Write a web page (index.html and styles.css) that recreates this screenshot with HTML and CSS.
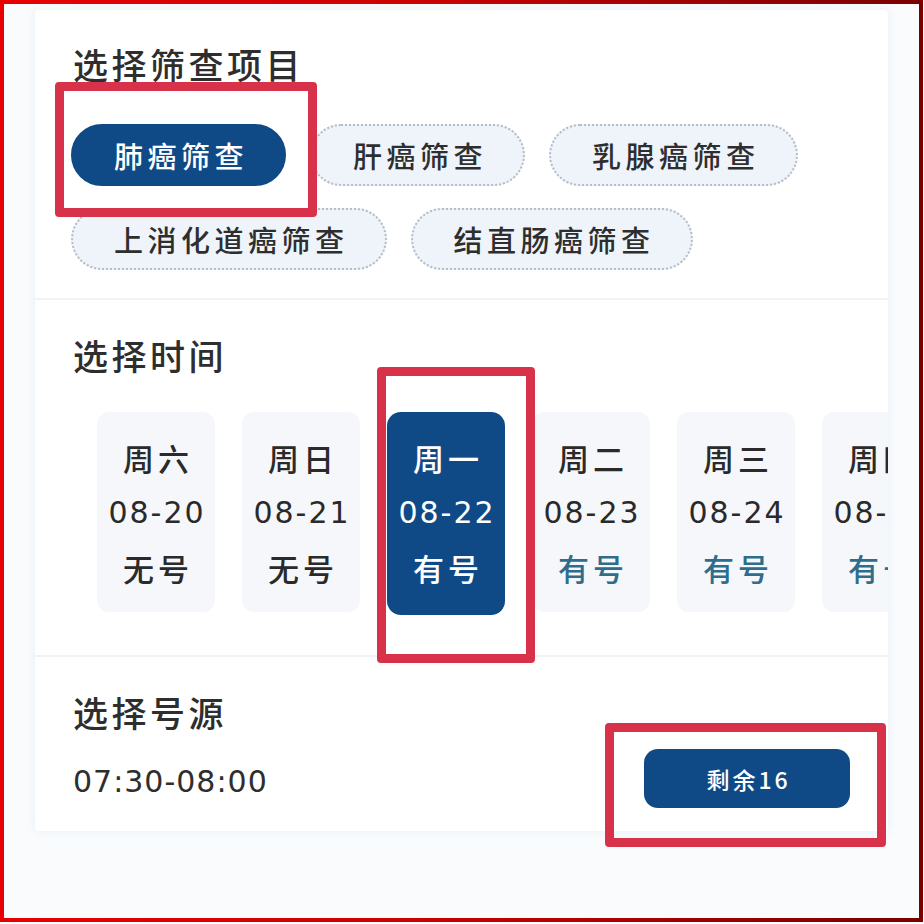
FILE: index.html
```html
<!DOCTYPE html>
<html lang="zh-CN">
<head>
<meta charset="utf-8">
<title>选择筛查项目</title>
<link rel="stylesheet" href="styles.css">
</head>
<body>
<div class="frame">
  <div class="card">
    <section class="section section-items">
      <h2 class="title">选择筛查项目</h2>
      <div class="chips">
        <span class="chip chip-active">肺癌筛查</span>
        <span class="chip">肝癌筛查</span>
        <span class="chip">乳腺癌筛查</span>
        <span class="chip">上消化道癌筛查</span>
        <span class="chip">结直肠癌筛查</span>
      </div>
    </section>
    <section class="section section-time">
      <h2 class="title">选择时间</h2>
      <div class="dates">
        <div class="date"><span class="cn">周六</span><span class="num">08-20</span><span class="cn none">无号</span></div>
        <div class="date"><span class="cn">周日</span><span class="num">08-21</span><span class="cn none">无号</span></div>
        <div class="date date-active"><span class="cn">周一</span><span class="num">08-22</span><span class="cn has">有号</span></div>
        <div class="date"><span class="cn">周二</span><span class="num">08-23</span><span class="cn has">有号</span></div>
        <div class="date"><span class="cn">周三</span><span class="num">08-24</span><span class="cn has">有号</span></div>
        <div class="date"><span class="cn">周四</span><span class="num">08-25</span><span class="cn has">有号</span></div>
      </div>
    </section>
    <section class="section section-source">
      <h2 class="title">选择号源</h2>
      <div class="slot">
        <span class="slot-time">07:30-08:00</span>
        <button class="slot-btn">剩余16</button>
      </div>
    </section>
  </div>
  <div class="mark mark-1"></div>
  <div class="mark mark-2"></div>
  <div class="mark mark-3"></div>
</div>
</body>
</html>
```
FILE: styles.css
```css
html, body {
  margin: 0;
  padding: 0;
  background: #ffffff;
}

body {
  font-family: "DejaVu Sans", "Noto Sans CJK SC", sans-serif;
  color: #2b2b2b;
}

.frame {
  position: relative;
  width: 923px;
  height: 922px;
  box-sizing: border-box;
  border: 4px solid #e00000;
  border-image: linear-gradient(to right, #e80000 0%, #cc0000 45%, #7a0000 100%) 1;
  background: #f9fbfd;
  padding: 6px 31px 0 31px;
}

.card {
  background: #ffffff;
  border-radius: 4px;
  box-shadow: 0 0 8px rgba(200, 220, 232, 0.35);
}

.section {
  padding: 0 38px;
  border-bottom: 2px solid #f0f2f5;
}

.section-source {
  border-bottom: none;
}

.title {
  margin: 0;
  font-family: "Noto Sans CJK SC", sans-serif;
  font-size: 35px;
  line-height: 40px;
  font-weight: 500;
  letter-spacing: 3.5px;
  color: #2e2e2e;
}

.section-items {
  padding-top: 34px;
  padding-bottom: 28px;
}

.section-items .title {
  margin-bottom: 40px;
}

.chips {
  display: flex;
  flex-wrap: wrap;
  gap: 22px 24px;
  margin-left: -2px;
}

.chip {
  box-sizing: border-box;
  height: 62px;
  line-height: 58px;
  padding: 0 36px 0 41px;
  border: 2px dotted #b4bcc6;
  border-radius: 31px;
  background: #eef4fa;
  font-family: "Noto Sans CJK SC", sans-serif;
  font-size: 29px;
  font-weight: 500;
  letter-spacing: 4.5px;
  color: #2e2e2e;
}

.chip-active {
  background: #0f4a86;
  border: 2px solid #0f4a86;
  color: #ffffff;
}

.section-time {
  padding-top: 35px;
  padding-bottom: 40px;
}

.section-time .title {
  margin-bottom: 37px;
}

.dates {
  display: flex;
  gap: 27px;
  padding-left: 24px;
  margin-right: -38px;
  overflow: hidden;
}

.date {
  flex: 0 0 118px;
  height: 200px;
  box-sizing: border-box;
  padding: 18px 0 17px;
  border-radius: 12px;
  background: #f6f7fb;
  display: flex;
  flex-direction: column;
  align-items: center;
}

.date span {
  display: block;
  height: 55px;
  line-height: 55px;
  white-space: nowrap;
}

.date .cn {
  font-family: "Noto Sans CJK SC", sans-serif;
  font-size: 31px;
  font-weight: 500;
  letter-spacing: 4px;
  padding-left: 4px;
  color: #2a2a2a;
}

.date .num {
  font-size: 30px;
  letter-spacing: 2px;
  padding-left: 2px;
  color: #2a2a2a;
}

.date .has {
  color: #2f6d8c;
}

.date-active {
  background: #0f4a86;
  border-radius: 14px;
  height: 203px;
}

.date-active .cn,
.date-active .num,
.date-active .has {
  color: #ffffff;
}

.section-source {
  padding-top: 35px;
  padding-bottom: 23px;
}

.section-source .title {
  margin-bottom: 17px;
}

.slot {
  display: flex;
  justify-content: space-between;
  align-items: center;
}

.slot-time {
  font-size: 30px;
  letter-spacing: 1px;
  color: #2e2e2e;
  margin-top: 6px;
}

.slot-btn {
  width: 206px;
  height: 59px;
  border: none;
  border-radius: 14px;
  background: #0f4a86;
  color: #ffffff;
  font-family: "Noto Sans CJK SC", sans-serif;
  font-size: 23px;
  font-weight: 500;
  letter-spacing: 3px;
  padding: 0 0 0 3px;
}

.mark {
  position: absolute;
  box-sizing: border-box;
  border: 9px solid #d8324b;
  border-radius: 4px;
}

.mark-1 {
  left: 51px;
  top: 78px;
  width: 262px;
  height: 135px;
}

.mark-2 {
  left: 373px;
  top: 363px;
  width: 158px;
  height: 296px;
}

.mark-3 {
  left: 601px;
  top: 719px;
  width: 281px;
  height: 124px;
}
```
